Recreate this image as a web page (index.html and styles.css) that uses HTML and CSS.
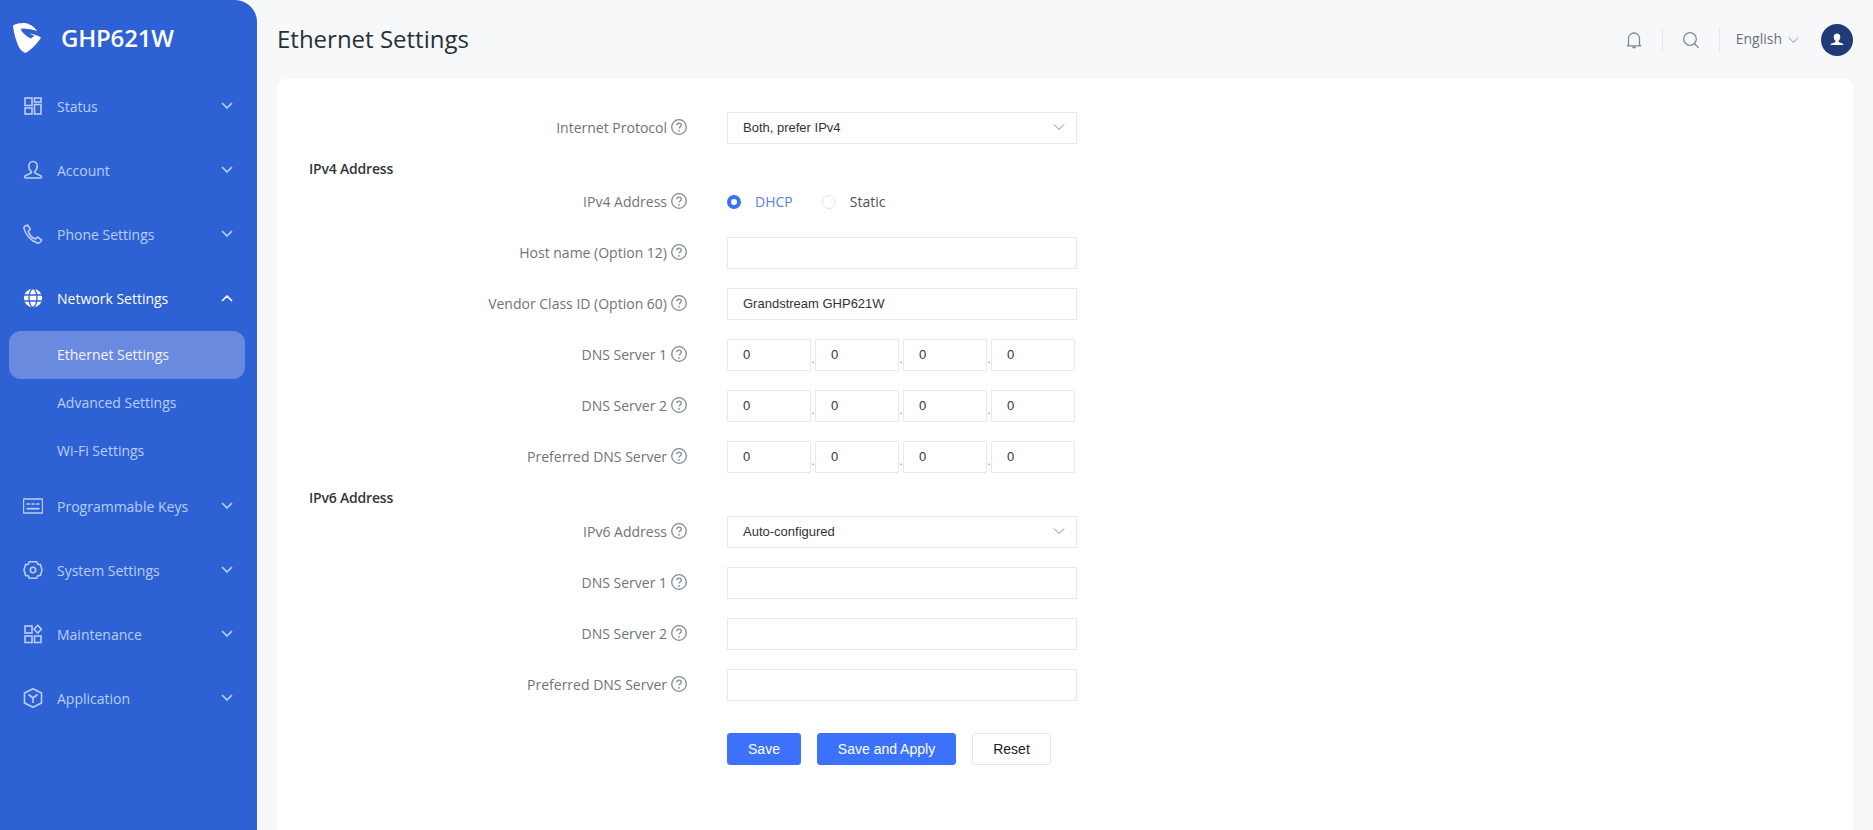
FILE: index.html
```html
<!DOCTYPE html>
<html lang="en">
<head>
    <meta charset="UTF-8">
    <title>Ethernet Settings</title>
    <link rel="stylesheet" href="styles.css">
</head>
<body>

<svg class="icon-defs" width="0" height="0">
    <defs>
        <symbol id="chev" viewBox="0 0 12 8"><path d="M1.5 1.5 6 6l4.5-4.5" fill="none" stroke="currentColor" stroke-width="1.7" stroke-linecap="round" stroke-linejoin="round"/></symbol>
        <symbol id="thin-chev" viewBox="0 0 12 8"><path d="M1 1.5 6 6.5l5-5" fill="none" stroke="currentColor" stroke-width="1"/></symbol>
        <symbol id="help" viewBox="0 0 16 16"><circle cx="8" cy="8" r="7.300" fill="none" stroke="currentColor" stroke-width="1.300"/><path d="M5.700 6.300A2.300 2.300 0 0 1 8 4.200c1.300 0 2.300.9 2.300 2.100 0 1.700-2.300 1.700-2.300 3.300" fill="none" stroke="currentColor" stroke-width="1.300"/><circle cx="8" cy="11.800" r=".9" fill="currentColor"/></symbol>
    </defs>
</svg>

<aside class="sidebar">
    <div class="brand">
        <svg class="brand-logo" viewBox="0 0 28 30"><path fill="#fff" d="M0 2.500C4 .5 9-.3 13 .3 17 1 21.500 4 24 8 20 6.500 14 5.500 9.500 5.500 8 5.500 7.500 7 8.500 8 10.500 10.500 14 13.500 17.500 15.500L21.500 13 16.500 10.500C20 11 25 12.500 28 14.500 24 21 18 27 12.500 30 8 28.500 5.500 24 4 19.500 2 14 .5 8 0 2.500Z"/></svg>
        <span class="brand-name">GHP621W</span>
    </div>
    <nav>
        <a class="nav-item">
            <svg class="nav-icon" viewBox="0 0 20 20"><g fill="none" stroke="currentColor" stroke-width="1.600"><rect x="2" y="2" width="7" height="7.500"/><rect x="11.500" y="2" width="6.500" height="4"/><rect x="2" y="12" width="7" height="6"/><rect x="11.500" y="8.500" width="6.500" height="9.500"/></g></svg>
            <span class="nav-text">Status</span>
            <svg class="nav-chev"><use href="#chev"/></svg>
        </a>
        <a class="nav-item">
            <svg class="nav-icon" viewBox="0 0 20 20"><path fill="none" stroke="currentColor" stroke-width="1.600" stroke-linejoin="round" d="M10 1.500c2.500 0 4.200 2 4.200 4.500s-1.300 4.500-2.500 5.300v1.500l6.300 3.200c.7.400.5 2-.5 2H2.500c-1 0-1.200-1.600-.5-2l6.300-3.200v-1.500C7.100 10.500 5.800 8.500 5.800 6s1.700-4.500 4.200-4.500Z"/></svg>
            <span class="nav-text">Account</span>
            <svg class="nav-chev"><use href="#chev"/></svg>
        </a>
        <a class="nav-item">
            <svg class="nav-icon" viewBox="0 0 20 20"><path fill="none" stroke="currentColor" stroke-width="1.600" stroke-linejoin="round" d="M1.500 2.500 4.500 1l2.800 4.200-2 2c.8 3 4 6.500 7.300 7.700l2-1.800 4 2.900-1.500 2.300c-.6.700-1.600 1-2.500.8C9 17.500 2.500 11 1 4.300c-.1-.7.100-1.400.5-1.800Z"/></svg>
            <span class="nav-text">Phone Settings</span>
            <svg class="nav-chev"><use href="#chev"/></svg>
        </a>
        <a class="nav-item nav-item-open">
            <svg class="nav-icon" viewBox="0 0 20 20"><circle cx="10" cy="10" r="9.200" fill="currentColor"/><g fill="none" stroke="#2e62d4" stroke-width="1.300"><ellipse cx="10" cy="10" rx="4" ry="9.200"/><path d="M1 7h18M1 13h18"/></g></svg>
            <span class="nav-text">Network Settings</span>
            <svg class="nav-chev nav-chev-up"><use href="#chev"/></svg>
        </a>
        <a class="nav-sub nav-sub-active">Ethernet Settings</a>
        <a class="nav-sub">Advanced Settings</a>
        <a class="nav-sub">Wi-Fi Settings</a>
        <a class="nav-item">
            <svg class="nav-icon" viewBox="0 0 20 20"><g fill="none" stroke="currentColor" stroke-width="1.700"><rect x=".3" y="3" width="19.400" height="14" rx="1"/><path d="M3.500 12.700h13"/><path d="M3.500 8h3.500M8.300 8h3.400M13 8h3.500" stroke-width="1.400"/></g></svg>
            <span class="nav-text">Programmable Keys</span>
            <svg class="nav-chev"><use href="#chev"/></svg>
        </a>
        <a class="nav-item">
            <svg class="nav-icon" viewBox="0 0 20 20"><g fill="none" stroke="currentColor" stroke-width="1.600" stroke-linejoin="round"><path d="M6.200 1.800h7.600l1 2.400 2.700.4L19 10l-1.500 5.400-2.700.4-1 2.400H6.200l-1-2.400-2.700-.4L1 10l1.500-5.400 2.700-.4Z"/><circle cx="10" cy="10" r="2.700"/></g></svg>
            <span class="nav-text">System Settings</span>
            <svg class="nav-chev"><use href="#chev"/></svg>
        </a>
        <a class="nav-item">
            <svg class="nav-icon" viewBox="0 0 20 20"><g fill="none" stroke="currentColor" stroke-width="1.600"><rect x="2" y="2" width="7" height="7"/><rect x="2" y="12" width="7" height="6.500"/><rect x="11.500" y="12" width="6.500" height="6.500"/><path d="m14.700 1.300 3.700 3.900-3.700 3.900L11 5.200Z"/></g></svg>
            <span class="nav-text">Maintenance</span>
            <svg class="nav-chev"><use href="#chev"/></svg>
        </a>
        <a class="nav-item">
            <svg class="nav-icon" viewBox="0 0 20 20"><g fill="none" stroke="currentColor" stroke-width="1.600" stroke-linejoin="round"><path d="M10 .8 18.500 5v10L10 19.200 1.500 15V5Z"/><path d="m5.500 6.500 4.500 3.500 4.500-3.500M10 10v5"/></g></svg>
            <span class="nav-text">Application</span>
            <svg class="nav-chev"><use href="#chev"/></svg>
        </a>
    </nav>
</aside>

<div class="main">
    <header class="topbar">
        <h1>Ethernet Settings</h1>
        <div class="topbar-tools">
            <svg class="tool-icon" viewBox="0 0 18 18"><path fill="none" stroke="currentColor" stroke-width="1.300" d="M3.500 14V7.500a5.500 5.500 0 0 1 11 0V14l1.500.8H2Z"/><path fill="currentColor" d="M7 15.500h4a2 2 0 0 1-4 0Z"/></svg>
            <span class="tool-sep tool-sep-first"></span>
            <svg class="tool-icon" viewBox="0 0 18 18"><g fill="none" stroke="currentColor" stroke-width="1.300"><circle cx="8" cy="8" r="6.300"/><path d="m12.500 12.800 4 4"/></g></svg>
            <span class="tool-sep"></span>
            <span class="lang">English</span>
            <svg class="lang-chev"><use href="#thin-chev"/></svg>
            <span class="avatar">
                <svg viewBox="0 0 16 16"><path fill="#fff" d="M8 1.500c2 0 3.300 1.500 3.300 3.500S10.200 8.300 9.500 9l.1 1 4.400 1.800c.4.200.5 1.200 0 1.200H2c-.5 0-.4-1 0-1.200L6.400 10l.1-1C5.800 8.300 4.700 7 4.700 5S6 1.500 8 1.500Z"/></svg>
            </span>
        </div>
    </header>

    <section class="card">
        <div class="form-row">
            <label class="form-label">Internet Protocol <svg class="help"><use href="#help"/></svg></label>
            <div class="select">Both, prefer IPv4 <svg class="select-chev"><use href="#thin-chev"/></svg></div>
        </div>

        <div class="form-title">IPv4 Address</div>
        <div class="form-row">
            <label class="form-label">IPv4 Address <svg class="help"><use href="#help"/></svg></label>
            <div class="radio-group">
                <span class="radio radio-on"></span><span class="radio-text radio-text-on">DHCP</span>
                <span class="radio"></span><span class="radio-text">Static</span>
            </div>
        </div>
        <div class="form-row">
            <label class="form-label">Host name (Option 12) <svg class="help"><use href="#help"/></svg></label>
            <input class="input" type="text">
        </div>
        <div class="form-row">
            <label class="form-label">Vendor Class ID (Option 60) <svg class="help"><use href="#help"/></svg></label>
            <input class="input" type="text" value="Grandstream GHP621W">
        </div>
        <div class="form-row">
            <label class="form-label">DNS Server 1 <svg class="help"><use href="#help"/></svg></label>
            <div class="ip-group">
                <input class="input ip" type="text" value="0"><span class="ip-dot">.</span>
                <input class="input ip" type="text" value="0"><span class="ip-dot">.</span>
                <input class="input ip" type="text" value="0"><span class="ip-dot">.</span>
                <input class="input ip" type="text" value="0">
            </div>
        </div>
        <div class="form-row">
            <label class="form-label">DNS Server 2 <svg class="help"><use href="#help"/></svg></label>
            <div class="ip-group">
                <input class="input ip" type="text" value="0"><span class="ip-dot">.</span>
                <input class="input ip" type="text" value="0"><span class="ip-dot">.</span>
                <input class="input ip" type="text" value="0"><span class="ip-dot">.</span>
                <input class="input ip" type="text" value="0">
            </div>
        </div>
        <div class="form-row">
            <label class="form-label">Preferred DNS Server <svg class="help"><use href="#help"/></svg></label>
            <div class="ip-group">
                <input class="input ip" type="text" value="0"><span class="ip-dot">.</span>
                <input class="input ip" type="text" value="0"><span class="ip-dot">.</span>
                <input class="input ip" type="text" value="0"><span class="ip-dot">.</span>
                <input class="input ip" type="text" value="0">
            </div>
        </div>

        <div class="form-title form-title-v6">IPv6 Address</div>
        <div class="form-row">
            <label class="form-label">IPv6 Address <svg class="help"><use href="#help"/></svg></label>
            <div class="select">Auto-configured <svg class="select-chev"><use href="#thin-chev"/></svg></div>
        </div>
        <div class="form-row">
            <label class="form-label">DNS Server 1 <svg class="help"><use href="#help"/></svg></label>
            <input class="input" type="text">
        </div>
        <div class="form-row">
            <label class="form-label">DNS Server 2 <svg class="help"><use href="#help"/></svg></label>
            <input class="input" type="text">
        </div>
        <div class="form-row">
            <label class="form-label">Preferred DNS Server <svg class="help"><use href="#help"/></svg></label>
            <input class="input" type="text">
        </div>

        <div class="form-actions">
            <button class="btn btn-primary btn-save" type="button">Save</button>
            <button class="btn btn-primary btn-apply" type="button">Save and Apply</button>
            <button class="btn btn-reset" type="button">Reset</button>
        </div>
    </section>
</div>

</body>
</html>
```

FILE: styles.css
```css
* {
    box-sizing: border-box;
}
html, body {
    height: 100%;
}
body {
    margin: 0;
    display: flex;
    overflow: hidden;
    background: #f7f8fa;
    font-family: "Open Sans", sans-serif;
    font-size: 14px;
    color: #5f6670;
}
.icon-defs {
    position: absolute;
}

/* sidebar */
.sidebar {
    flex: 0 0 257px;
    background: #2e62d4;
    border-top-right-radius: 22px;
}
.brand {
    height: 75px;
    padding: 23px 0 22px 13px;
    display: flex;
    align-items: center;
}
.brand-logo {
    width: 28px;
    height: 30px;
}
.brand-name {
    margin-left: 20px;
    padding-bottom: 2px;
    font-size: 24px;
    font-weight: 600;
    color: #fff;
    letter-spacing: -0.2px;
}
.nav-item {
    height: 64px;
    display: flex;
    align-items: center;
    padding: 0 0 2px 23px;
    color: #b9cdf8;
}
.nav-item-open {
    color: #fff;
}
.nav-icon {
    width: 20px;
    height: 20px;
    flex: none;
}
.nav-text {
    margin-left: 14px;
    flex: 1;
}
.nav-chev {
    width: 12px;
    height: 8px;
    margin-right: 24px;
}
.nav-chev-up {
    transform: rotate(180deg);
}
.nav-sub {
    display: block;
    height: 48px;
    margin: 0 12px 0 9px;
    padding-left: 48px;
    line-height: 48px;
    color: #b9cdf8;
    border-radius: 12px;
}
.nav-sub-active {
    background: #6a8ae0;
    color: #f2f5fd;
}

/* main */
.main {
    flex: 1;
    min-width: 0;
    padding: 0 20px 0 20px;
    display: flex;
    flex-direction: column;
}
.topbar {
    height: 79px;
    display: flex;
    align-items: center;
    justify-content: space-between;
}
h1 {
    margin: 0;
    padding-bottom: 2px;
    font-size: 24px;
    font-weight: 500;
    color: #283038;
}
.topbar-tools {
    display: flex;
    align-items: center;
}
.tool-icon {
    width: 18px;
    height: 18px;
    color: #7f8a96;
}
.tool-sep {
    width: 1px;
    height: 24px;
    margin: 0 21px 0 19px;
    background: #e6e8ec;
}
.tool-sep-first {
    margin: 0 19px;
}
.lang {
    margin-left: -5px;
    padding-bottom: 2px;
    color: #6a7078;
}
.lang-chev {
    width: 11px;
    height: 8px;
    margin-left: 6px;
    color: #7f8a96;
}
.avatar {
    width: 32px;
    height: 32px;
    margin-left: 22px;
    border-radius: 50%;
    background: #213a78;
    display: flex;
    align-items: center;
    justify-content: center;
}
.avatar svg {
    width: 16px;
    height: 16px;
}

/* form card */
.card {
    flex: 1;
    background: #fff;
    border-radius: 8px 8px 0 0;
    padding: 33px 32px 0;
}
.form-row {
    display: flex;
    align-items: center;
    height: 32px;
    margin-top: 19px;
}
.form-row:first-child {
    margin-top: 0;
}
.form-title {
    height: 22px;
    line-height: 22px;
    margin: 14px 0 6px;
    font-weight: 600;
    font-size: 14px;
    letter-spacing: -0.2px;
    color: #30363e;
}
.form-title-v6 {
    margin-bottom: 7px;
}
.form-title + .form-row {
    margin-top: 0;
}
.form-label {
    flex: 0 0 378px;
    margin-right: 40px;
    padding-bottom: 2px;
    display: flex;
    align-items: center;
    justify-content: flex-end;
    color: #6e747c;
}
.help {
    width: 16px;
    height: 16px;
    margin-left: 4px;
    color: #7f8a96;
}
.input, .select {
    width: 350px;
    height: 32px;
    border: 1px solid #e8e9eb;
    background: #fff;
    padding: 0 15px 2px;
    font-family: "Liberation Sans", Arial, sans-serif;
    font-size: 13px;
    color: #30343a;
    outline: none;
}
.select {
    display: flex;
    align-items: center;
    justify-content: space-between;
}
.select-chev {
    width: 12px;
    height: 8px;
    margin-right: -4px;
    color: #7f8a96;
}
.radio-group {
    display: flex;
    align-items: center;
}
.radio {
    width: 14px;
    height: 14px;
    border-radius: 50%;
    border: 1px solid #e3e5e8;
}
.radio-on {
    border: 4.5px solid #3c71f6;
}
.radio-text {
    margin-left: 14px;
    padding-bottom: 2px;
    color: #4c5258;
}
.radio-text-on {
    margin-right: 29px;
    color: #5b80e4;
}
.ip-group {
    display: flex;
    align-items: center;
}
.ip {
    width: 84px;
    border-radius: 1px;
}
.ip-dot {
    width: 4px;
    margin-top: 7px;
    line-height: 1;
    font-size: 11px;
    text-align: center;
    color: #777;
}
.form-actions {
    margin: 32px 0 0 418px;
    display: flex;
    gap: 16px;
}
.btn {
    height: 32px;
    border-radius: 3px;
    font-family: "Liberation Sans", Arial, sans-serif;
    font-size: 14px;
    border: 1px solid #e4e5e7;
    background: #fff;
    color: #222;
    padding: 0;
}
.btn-primary {
    background: #3c72fb;
    border-color: #3c72fb;
    color: #fff;
}
.btn-save {
    width: 74px;
}
.btn-apply {
    width: 139px;
}
.btn-reset {
    width: 79px;
}
```
